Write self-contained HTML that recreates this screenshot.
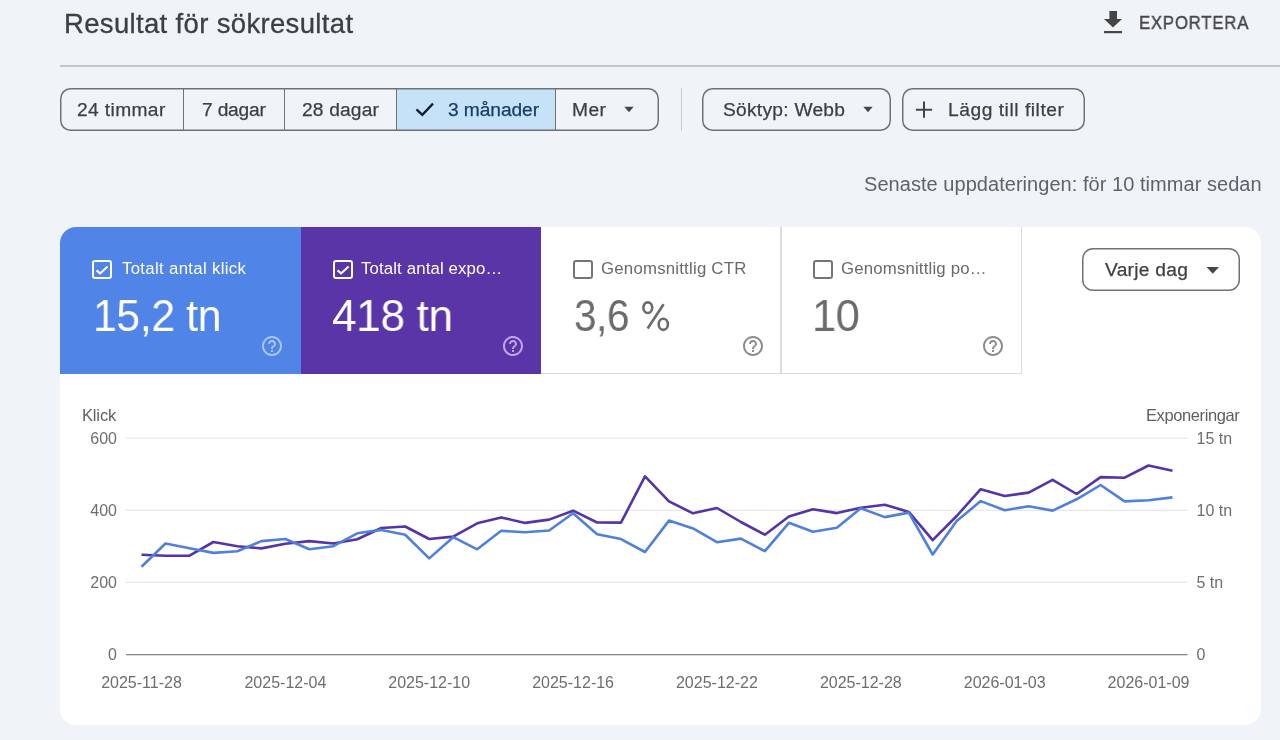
<!DOCTYPE html>
<html><head><meta charset="utf-8">
<style>
*{box-sizing:border-box;margin:0;padding:0}
html,body{width:1280px;height:740px;overflow:hidden;background:#f0f4f9;font-family:"Liberation Sans",sans-serif}
.t{position:absolute;white-space:nowrap;line-height:1;will-change:transform}
.r,.s{position:absolute}
</style></head><body>
<div class="t" style="left:64.20px;top:9.92px;font-size:27.5px;color:#3c4043;letter-spacing:0.34px;-webkit-text-stroke:0.3px #3c4043;">Resultat för sökresultat</div>
<svg class="s" style="left:1100px;top:8px" width="26" height="28" viewBox="0 0 26 28"><path d="M9.4 3h7.6v8h5l-9 8.4-9-8.4h5.4z" fill="#444746"/><rect x="4" y="23" width="18" height="2.2" fill="#444746"/></svg>
<div class="t" style="left:1139.36px;top:13.64px;font-size:18.5px;color:#444746;letter-spacing:0.965px;transform:scaleX(0.9);transform-origin:left top;-webkit-text-stroke:0.45px #444746;">EXPORTERA</div>
<div class="r" style="left:60px;top:65px;width:1220px;height:1.6px;background:#c4c7c5"></div>
<div class="r" style="left:397px;top:88.5px;width:158.6px;height:42px;background:#c6e2f8"></div>
<div class="r" style="left:60px;top:88px;width:599px;height:43px;box-shadow:inset 0 0 0 1.5px #6f7271;border-radius:10.5px"></div>
<div class="r" style="left:182.95px;top:88px;width:1.3px;height:43px;background:#6f7271"></div>
<div class="r" style="left:283.85px;top:88px;width:1.3px;height:43px;background:#6f7271"></div>
<div class="r" style="left:396.05px;top:88px;width:1.3px;height:43px;background:#6f7271"></div>
<div class="r" style="left:554.95px;top:88px;width:1.3px;height:43px;background:#6f7271"></div>
<div class="t" style="left:76.94px;top:99.74px;font-size:19.2px;color:#3c4043;letter-spacing:0.375px;-webkit-text-stroke:0.25px #3c4043;">24 timmar</div>
<div class="t" style="left:202.08px;top:99.74px;font-size:19.2px;color:#3c4043;letter-spacing:-0.184px;-webkit-text-stroke:0.25px #3c4043;">7 dagar</div>
<div class="t" style="left:301.60px;top:99.74px;font-size:19.2px;color:#3c4043;letter-spacing:0.157px;-webkit-text-stroke:0.25px #3c4043;">28 dagar</div>
<svg class="s" style="left:414px;top:100.2px" width="22" height="18" viewBox="0 0 22 18"><path d="M2.5 9.3l5.8 5.6L19 3.6" fill="none" stroke="#0b1d2f" stroke-width="2.3"/></svg>
<div class="t" style="left:448.26px;top:99.74px;font-size:19.2px;color:#173d67;letter-spacing:-0.083px;-webkit-text-stroke:0.25px #173d67;">3 månader</div>
<div class="t" style="left:572.42px;top:99.74px;font-size:19.2px;color:#3c4043;letter-spacing:0.4px;-webkit-text-stroke:0.25px #3c4043;">Mer</div>
<svg class="s" style="left:624px;top:106px" width="10" height="7" viewBox="0 0 10 7"><path d="M0.3 0.8h9.4L5 6.2z" fill="#444746"/></svg>
<div class="r" style="left:680.7px;top:88px;width:1.3px;height:43px;background:#c9ccd0"></div>
<div class="r" style="left:702px;top:88px;width:189px;height:43px;box-shadow:inset 0 0 0 1.5px #6f7271;border-radius:10.5px"></div>
<div class="t" style="left:723.08px;top:99.74px;font-size:19.2px;color:#3c4043;letter-spacing:0.259px;-webkit-text-stroke:0.25px #3c4043;">Söktyp: Webb</div>
<svg class="s" style="left:863px;top:106px" width="10" height="7" viewBox="0 0 10 7"><path d="M0.3 0.8h9.4L5 6.2z" fill="#444746"/></svg>
<div class="r" style="left:902px;top:88px;width:183px;height:43px;box-shadow:inset 0 0 0 1.5px #6f7271;border-radius:10.5px"></div>
<svg class="s" style="left:914px;top:100px" width="20" height="20" viewBox="0 0 20 20"><path d="M10 1.6v16.2M1.9 9.7h16.2" stroke="#444746" stroke-width="2"/></svg>
<div class="t" style="left:947.56px;top:99.74px;font-size:19.2px;color:#3c4043;letter-spacing:0.544px;-webkit-text-stroke:0.25px #3c4043;">Lägg till filter</div>
<div class="t" style="right:18.64px;top:173.87px;font-size:20px;color:#5f6368;letter-spacing:0.044px;">Senaste uppdateringen: för 10 timmar sedan</div>
<div class="r" style="left:60px;top:227px;width:1201px;height:498px;background:#fff;border-radius:16px"></div>
<div class="r" style="left:60px;top:227px;width:241px;height:146.8px;background:#5084e6;border-top-left-radius:16px"></div>
<div class="r" style="left:301px;top:227px;width:240px;height:146.8px;background:#5935a8"></div>
<div class="r" style="left:541px;top:227px;width:481px;height:147px;border-right:1.2px solid #dadce0;border-bottom:1.2px solid #dadce0"></div>
<div class="r" style="left:780.4px;top:227px;width:1.2px;height:147px;background:#dadce0"></div>
<div class="r" style="left:92px;top:260.3px;width:20px;height:19px;border:2.1px solid #fff;border-radius:3px"></div>
<svg class="s" style="left:92px;top:260px" width="20" height="20" viewBox="0 0 20 20"><path d="M4.5 10.4L8.1 13.4L15.6 6.4" fill="none" stroke="#fff" stroke-width="2.1"/></svg>
<div class="t" style="left:121.74px;top:260.78px;font-size:16.8px;color:#fff;letter-spacing:0.324px;">Totalt antal klick</div>
<div class="t" style="left:92.80px;top:294.32px;font-size:44.5px;color:#fff;letter-spacing:-0.4px;transform:scaleX(0.9604);transform-origin:left top;">15,2 tn</div>
<svg class="s" style="left:260.1px;top:334px" width="24" height="24" viewBox="0 0 24 24"><path fill="#abc8fa" d="M11 18h2v-2h-2v2zm1-16C6.48 2 2 6.48 2 12s4.48 10 10 10 10-4.48 10-10S17.52 2 12 2zm0 18c-4.41 0-8-3.59-8-8s3.59-8 8-8 8 3.59 8 8-3.59 8-8 8zm0-14c-2.21 0-4 1.79-4 4h2c0-1.1.9-2 2-2s2 .9 2 2c0 2-3 1.75-3 5h2c0-2.25 3-2.5 3-5 0-2.21-1.79-4-4-4z"/></svg>
<div class="r" style="left:333px;top:260.3px;width:20px;height:19px;border:2.1px solid #fff;border-radius:3px"></div>
<svg class="s" style="left:333px;top:260px" width="20" height="20" viewBox="0 0 20 20"><path d="M4.5 10.4L8.1 13.4L15.6 6.4" fill="none" stroke="#fff" stroke-width="2.1"/></svg>
<div class="t" style="left:361.46px;top:260.78px;font-size:16.8px;color:#fff;letter-spacing:0.135px;">Totalt antal expo…</div>
<div class="t" style="left:332.00px;top:294.32px;font-size:44.5px;color:#fff;letter-spacing:-0.4px;transform:scaleX(0.9944);transform-origin:left top;">418 tn</div>
<svg class="s" style="left:501.1px;top:334px" width="24" height="24" viewBox="0 0 24 24"><path fill="#bea6f2" d="M11 18h2v-2h-2v2zm1-16C6.48 2 2 6.48 2 12s4.48 10 10 10 10-4.48 10-10S17.52 2 12 2zm0 18c-4.41 0-8-3.59-8-8s3.59-8 8-8 8 3.59 8 8-3.59 8-8 8zm0-14c-2.21 0-4 1.79-4 4h2c0-1.1.9-2 2-2s2 .9 2 2c0 2-3 1.75-3 5h2c0-2.25 3-2.5 3-5 0-2.21-1.79-4-4-4z"/></svg>
<div class="r" style="left:573px;top:260.3px;width:20px;height:19px;border:2.1px solid #757575;border-radius:3px"></div>
<div class="t" style="left:601.46px;top:260.78px;font-size:16.8px;color:#6a6a6a;letter-spacing:0.219px;">Genomsnittlig CTR</div>
<div class="t" style="left:574.10px;top:294.32px;font-size:44.5px;color:#6b6b6b;letter-spacing:-0.4px;transform:scaleX(0.9095);transform-origin:left top;">3,6</div>
<svg class="s" style="left:741.1px;top:334px" width="24" height="24" viewBox="0 0 24 24"><path fill="#8c8c8c" d="M11 18h2v-2h-2v2zm1-16C6.48 2 2 6.48 2 12s4.48 10 10 10 10-4.48 10-10S17.52 2 12 2zm0 18c-4.41 0-8-3.59-8-8s3.59-8 8-8 8 3.59 8 8-3.59 8-8 8zm0-14c-2.21 0-4 1.79-4 4h2c0-1.1.9-2 2-2s2 .9 2 2c0 2-3 1.75-3 5h2c0-2.25 3-2.5 3-5 0-2.21-1.79-4-4-4z"/></svg>
<div class="r" style="left:813px;top:260.3px;width:20px;height:19px;border:2.1px solid #757575;border-radius:3px"></div>
<div class="t" style="left:841.22px;top:260.78px;font-size:16.8px;color:#6a6a6a;letter-spacing:0.172px;">Genomsnittlig po…</div>
<div class="t" style="left:812.40px;top:294.32px;font-size:44.5px;color:#6b6b6b;letter-spacing:-0.4px;transform:scaleX(0.9759);transform-origin:left top;">10</div>
<svg class="s" style="left:981.1px;top:334px" width="24" height="24" viewBox="0 0 24 24"><path fill="#8c8c8c" d="M11 18h2v-2h-2v2zm1-16C6.48 2 2 6.48 2 12s4.48 10 10 10 10-4.48 10-10S17.52 2 12 2zm0 18c-4.41 0-8-3.59-8-8s3.59-8 8-8 8 3.59 8 8-3.59 8-8 8zm0-14c-2.21 0-4 1.79-4 4h2c0-1.1.9-2 2-2s2 .9 2 2c0 2-3 1.75-3 5h2c0-2.25 3-2.5 3-5 0-2.21-1.79-4-4-4z"/></svg>
<svg class="s" style="left:630px;top:290px" width="50" height="50" viewBox="630 290 50 50"><g fill="none" stroke="#6b6b6b" stroke-width="2.6"><ellipse cx="647.8" cy="307.7" rx="4.4" ry="5.3"/><ellipse cx="663.3" cy="324.3" rx="4.6" ry="5.6"/><path d="M663.6 304.3L647.6 328.5"/></g></svg>
<div class="r" style="left:1082.2px;top:248.4px;width:157.5px;height:42.3px;box-shadow:inset 0 0 0 1.5px #6f7271;border-radius:11px"></div>
<div class="t" style="left:1105.26px;top:259.94px;font-size:19.2px;color:#3c4043;letter-spacing:0.275px;-webkit-text-stroke:0.25px #3c4043;">Varje dag</div>
<svg class="s" style="left:1206px;top:266px" width="14" height="9" viewBox="0 0 14 9"><path d="M0.6 1.0h12.4L6.8 7.8z" fill="#444746"/></svg>
<svg class="s" style="left:0;top:0" width="1280" height="740"><style>.c{font-family:"Liberation Sans",sans-serif;font-size:16px;fill:#6e6e6e}</style>
<rect x="126" y="437.6" width="1061.6" height="1.2" fill="#e6e6e6"/>
<rect x="126" y="509.7" width="1061.6" height="1.2" fill="#e6e6e6"/>
<rect x="126" y="581.8" width="1061.6" height="1.2" fill="#e6e6e6"/>
<rect x="126" y="654" width="1061.6" height="1.3" fill="#888"/>
<polyline points="141.5,554.7 165.5,555.7 189.5,555.7 213.4,542.0 237.4,546.2 261.4,548.4 285.4,543.8 309.3,541.1 333.3,543.5 357.3,539.2 381.3,528.0 405.2,526.5 429.2,539.0 453.2,536.6 477.2,523.3 501.2,517.4 525.1,522.9 549.1,519.6 573.1,510.7 597.1,522.5 621.0,522.6 645.0,476.4 669.0,501.4 693.0,513.3 716.9,508.0 740.9,522.0 764.9,534.7 788.9,516.5 812.9,509.2 836.8,513.1 860.8,507.7 884.8,504.7 908.8,511.9 932.7,540.2 956.7,516.0 980.7,489.2 1004.7,496.0 1028.6,492.6 1052.6,479.8 1076.6,494.0 1100.6,477.1 1124.6,477.7 1148.5,465.5 1172.5,470.7" fill="none" stroke="#5434a7" stroke-width="2.6" stroke-linejoin="round"/>
<polyline points="141.5,566.7 165.5,543.5 189.5,548.3 213.4,552.9 237.4,551.3 261.4,541.1 285.4,539.0 309.3,549.2 333.3,546.2 357.3,533.3 381.3,529.9 405.2,534.7 429.2,558.4 453.2,537.2 477.2,549.3 501.2,530.8 525.1,532.3 549.1,530.5 573.1,513.2 597.1,534.3 621.0,539.1 645.0,552.0 669.0,520.6 693.0,528.4 716.9,542.2 740.9,538.6 764.9,551.2 788.9,522.8 812.9,531.7 836.8,527.8 860.8,508.3 884.8,517.1 908.8,512.6 932.7,554.5 956.7,521.0 980.7,501.1 1004.7,510.2 1028.6,506.2 1052.6,510.6 1076.6,499.3 1100.6,485.0 1124.6,501.4 1148.5,500.2 1172.5,497.4" fill="none" stroke="#4f80da" stroke-width="2.6" stroke-linejoin="round"/>
<text x="117" y="443.8" text-anchor="end" class="c">600</text>
<text x="117" y="515.9" text-anchor="end" class="c">400</text>
<text x="117" y="588.0" text-anchor="end" class="c">200</text>
<text x="117" y="660.1" text-anchor="end" class="c">0</text>
<text x="1196.5" y="443.8" class="c">15 tn</text>
<text x="1196.5" y="515.9" class="c">10 tn</text>
<text x="1196.5" y="588.0" class="c">5 tn</text>
<text x="1196.5" y="660.1" class="c">0</text>
<text x="141.5" y="687.8" text-anchor="middle" class="c">2025-11-28</text>
<text x="285.4" y="687.8" text-anchor="middle" class="c">2025-12-04</text>
<text x="429.2" y="687.8" text-anchor="middle" class="c">2025-12-10</text>
<text x="573.1" y="687.8" text-anchor="middle" class="c">2025-12-16</text>
<text x="716.9" y="687.8" text-anchor="middle" class="c">2025-12-22</text>
<text x="860.8" y="687.8" text-anchor="middle" class="c">2025-12-28</text>
<text x="1004.7" y="687.8" text-anchor="middle" class="c">2026-01-03</text>
<text x="1148.5" y="687.8" text-anchor="middle" class="c">2026-01-09</text>
</svg>
<div class="t" style="left:81.66px;top:407.13px;font-size:16.5px;color:#5f5f5f;letter-spacing:-0.15px;">Klick</div>
<div class="t" style="left:1145.52px;top:406.83px;font-size:16.5px;color:#5f5f5f;letter-spacing:-0.401px;">Exponeringar</div>
</body></html>
